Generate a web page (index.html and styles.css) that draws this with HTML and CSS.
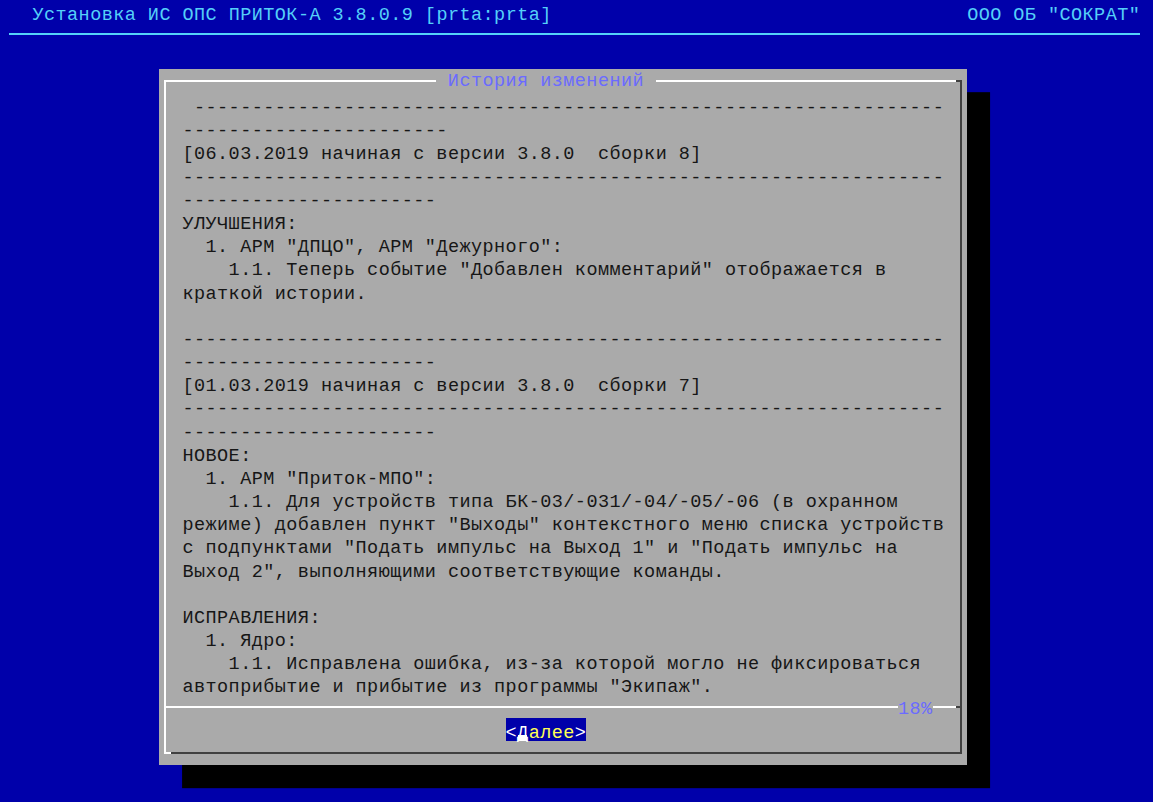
FILE: index.html
```html
<!DOCTYPE html>
<html lang="ru">
<head>
<meta charset="utf-8">
<title>Установка ИС ОПС ПРИТОК-А</title>
<link rel="stylesheet" href="styles.css">
</head>
<body>
<div class="screen">
  <div class="topbar">
    <span>Установка ИС ОПС ПРИТОК-А 3.8.0.9 [prta:prta]</span>
    <span>ООО ОБ "СОКРАТ"</span>
  </div>
  <div class="rule"></div>
  <div class="gap"></div>
  <div class="dialog">
    <div class="frame">
      <div class="title">История изменений</div>
<pre class="content"> -----------------------------------------------------------------
-----------------------
[06.03.2019 начиная с версии 3.8.0  сборки 8]
------------------------------------------------------------------
----------------------
УЛУЧШЕНИЯ:
  1. АРМ "ДПЦО", АРМ "Дежурного":
    1.1. Теперь событие "Добавлен комментарий" отображается в
краткой истории.

------------------------------------------------------------------
----------------------
[01.03.2019 начиная с версии 3.8.0  сборки 7]
------------------------------------------------------------------
----------------------
НОВОЕ:
  1. АРМ "Приток-МПО":
    1.1. Для устройств типа БК-03/-031/-04/-05/-06 (в охранном
режиме) добавлен пункт "Выходы" контекстного меню списка устройств
с подпунктами "Подать импульс на Выход 1" и "Подать импульс на
Выход 2", выполняющими соответствующие команды.

ИСПРАВЛЕНИЯ:
  1. Ядро:
    1.1. Исправлена ошибка, из-за которой могло не фиксироваться
автоприбытие и прибытие из программы "Экипаж".</pre>
      <div class="sep">
        <span class="sep-line"></span>
        <span class="pct">18%</span>
        <span class="sep-line short"></span>
        <span class="sep-tick"></span>
      </div>
      <div class="btnrow">
        <span class="btn">&lt;<span class="key">Д</span><span class="hl">алее</span>&gt;</span>
      </div>
    </div>
  </div>
</div>
</body>
</html>
```

FILE: styles.css
```css
:root {
  --cw: 11.54px;
  --rh: 23.17px;
  --blue: #0000aa;
  --gray: #aaaaaa;
  --cyan: #55d0f8;
  --title: #6b6bff;
  --dark: #404040;
}

html, body {
  margin: 0;
  padding: 0;
  width: 1153px;
  height: 802px;
  overflow: hidden;
  background: var(--blue);
}

body {
  font-family: "Liberation Mono", "DejaVu Sans Mono", monospace;
  font-size: 18.5px;
  letter-spacing: 0.44px;
  line-height: var(--rh);
}

.screen {
  margin-left: -2.2px;
  width: calc(100 * var(--cw));
}

.topbar {
  box-sizing: border-box;
  height: var(--rh);
  padding: 4px var(--cw) 0 calc(3 * var(--cw));
  display: flex;
  justify-content: space-between;
  align-items: flex-start;
  color: var(--cyan);
  white-space: pre;
  overflow: visible;
}

.rule {
  height: var(--rh);
  margin-left: var(--cw);
  width: calc(98 * var(--cw));
  display: flex;
  align-items: flex-start;
}

.rule::before {
  content: "";
  flex: 1;
  height: 2px;
  margin-top: 9.5px;
  background: var(--cyan);
}

.gap {
  height: var(--rh);
}

.dialog {
  box-sizing: border-box;
  margin-left: calc(14 * var(--cw));
  width: calc(70 * var(--cw));
  height: calc(30 * var(--rh));
  padding: 10.58px 4.77px;
  background: var(--gray);
  box-shadow: calc(2 * var(--cw)) var(--rh) 0 #000;
}

.frame {
  position: relative;
  box-sizing: border-box;
  height: 100%;
  border: 2px solid;
  border-color: #ffffff var(--dark) var(--dark) #ffffff;
  padding: 10.59px 0 10.58px 0;
  display: flex;
  flex-direction: column;
}

.frame::before {
  content: "";
  position: absolute;
  top: -2px;
  right: -2px;
  width: 6.77px;
  height: 2px;
  background: var(--dark);
}

.frame::after {
  content: "";
  position: absolute;
  bottom: -2px;
  left: -2px;
  width: 6.77px;
  height: 2px;
  background: #ffffff;
}

.title {
  position: absolute;
  top: -12.58px;
  left: 270.19px;
  box-sizing: border-box;
  height: var(--rh);
  padding: 3px var(--cw) 0;
  background: var(--gray);
  color: var(--title);
  line-height: 20.17px;
  white-space: pre;
}

.content {
  box-sizing: border-box;
  margin: 0;
  height: calc(26 * var(--rh));
  padding: 4.5px 0 0 16.31px;
  font: inherit;
  letter-spacing: inherit;
  line-height: var(--rh);
  white-space: pre;
  color: #161616;
  flex: none;
  overflow: visible;
}

.sep {
  height: var(--rh);
  display: flex;
  align-items: center;
  flex: none;
}

.sep-line {
  flex: 1;
  height: 2px;
  background: #ffffff;
}

.sep-line.short {
  flex: none;
  width: calc(2 * var(--cw));
}

.pct {
  width: calc(3 * var(--cw));
  color: var(--title);
  padding-top: 5px;
}

.sep-tick {
  width: 4.77px;
  height: 2px;
  background: var(--dark);
}

.btnrow {
  height: var(--rh);
  padding-left: 339.43px;
  display: flex;
  align-items: flex-start;
  flex: none;
}

.btn {
  position: relative;
  height: calc(var(--rh) - 4px);
  padding-top: 4px;
  background: var(--blue);
  color: #ffffff;
  white-space: pre;
}

.btn::after {
  content: "";
  position: absolute;
  left: calc(var(--cw) + 1px);
  bottom: 0;
  width: 9px;
  height: 6px;
  background: #ffffff;
}

.hl {
  color: #ffff55;
}
```
